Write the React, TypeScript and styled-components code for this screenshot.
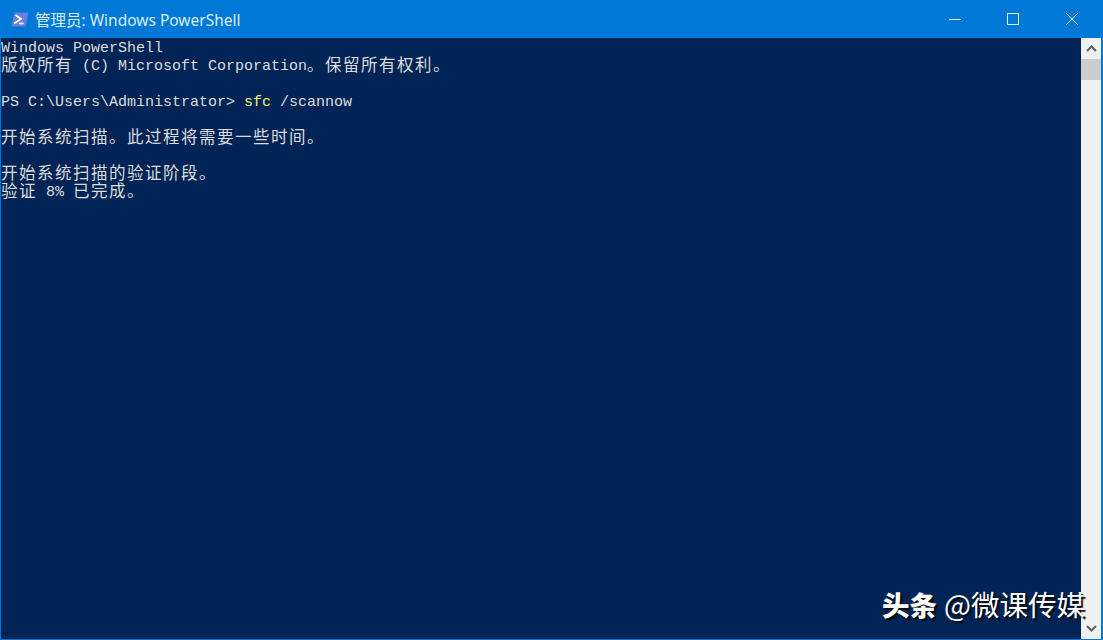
import { FC } from "react";
import styled, { createGlobalStyle } from "styled-components";

const GlobalStyle = createGlobalStyle`
  html, body {
    margin: 0;
    padding: 0;
    background: #0078d7;
  }
`;

const Window = styled.div`
  position: relative;
  width: 1103px;
  height: 640px;
  box-sizing: border-box;
  display: flex;
  flex-direction: column;
  overflow: hidden;
  background: #0078d7;
  padding: 0 2px 1px 1px;
`;

const TitleBar = styled.div`
  height: 38px;
  flex: none;
  display: flex;
  align-items: center;
  color: #d8eefc;
  padding-left: 10px;
`;

const AppIcon = styled.svg`
  width: 18px;
  height: 15px;
  flex: none;
  margin-right: 6px;
`;

const Title = styled.div`
  flex: 1;
  font-family: "Noto Sans", "Noto Sans CJK SC", sans-serif;
  font-size: 15.5px;
  white-space: nowrap;
`;

const Caption = styled.div`
  width: 58.5px;
  height: 38px;
  display: flex;
  align-items: center;
  justify-content: center;
  svg {
    width: 12px;
    height: 12px;
    stroke: #e8f6ff;
    fill: none;
    stroke-width: 1;
  }
`;

const Body = styled.div`
  flex: 1;
  display: flex;
  min-height: 0;
`;

const Console = styled.div`
  flex: 1;
  background: #012456;
  color: #dcdcdc;
  font-family: "Liberation Mono", monospace;
  font-size: 15px;
  line-height: 18px;
  white-space: pre;
  padding-top: 2px;
`;

const Line = styled.div`
  height: 18px;
`;

const Han = styled.span`
  font-family: "Noto Sans CJK SC", sans-serif;
  font-size: 16.5px;
  line-height: 0;
  letter-spacing: 1.5px;
  vertical-align: -1px;
`;

const Command = styled.span`
  color: #f0f078;
`;

const Scrollbar = styled.div`
  width: 20px;
  flex: none;
  display: flex;
  flex-direction: column;
  background: #f0f0f0;
`;

const ArrowButton = styled.div`
  height: 21px;
  flex: none;
  display: flex;
  align-items: center;
  justify-content: center;
  svg {
    width: 11px;
    height: 7px;
    fill: none;
    stroke: #606060;
    stroke-width: 2;
  }
`;

const Thumb = styled.div`
  height: 21px;
  flex: none;
  background: #cdcdcd;
`;

const Track = styled.div`
  flex: 1;
`;

const Watermark = styled.div`
  position: absolute;
  right: 18px;
  bottom: 18px;
  display: flex;
  align-items: center;
  gap: 7px;
  color: #fff;
  font-family: "Noto Sans CJK SC", sans-serif;
  line-height: 36px;
  white-space: nowrap;
  text-shadow: 2px 2px 1px #0a0a0a;
`;

const Brand = styled.span`
  font-size: 27.5px;
  font-weight: 900;
`;

const Handle = styled.span`
  font-size: 28.5px;
  font-weight: 400;
`;

const App: FC = () => {
  return (
    <Window>
      <GlobalStyle />
      <TitleBar>
        <AppIcon viewBox="0 0 18 15">
          <path d="M3.5 0.5H17.5L14.5 14.5H0.5Z" fill="#6a7fe0" />
          <path d="M4.5 3L10 7L3 11.5" fill="none" stroke="#fff" strokeWidth="1.8" />
          <path d="M8 11.5H12.5" fill="none" stroke="#fff" strokeWidth="1.6" />
        </AppIcon>
        <Title>管理员: Windows PowerShell</Title>
        <Caption>
          <svg viewBox="0 0 12 12">
            <path d="M0 6.5H12" />
          </svg>
        </Caption>
        <Caption>
          <svg viewBox="0 0 12 12">
            <rect x="0.5" y="0.5" width="11" height="11" />
          </svg>
        </Caption>
        <Caption>
          <svg viewBox="0 0 12 12">
            <path d="M0 0L12 12M12 0L0 12" />
          </svg>
        </Caption>
      </TitleBar>
      <Body>
        <Console>
          <Line>Windows PowerShell</Line>
          <Line>
            <Han>版权所有</Han> (C) Microsoft Corporation<Han>。保留所有权利。</Han>
          </Line>
          <Line />
          <Line>
            PS C:\Users\Administrator&gt; <Command>sfc</Command> /scannow
          </Line>
          <Line />
          <Line>
            <Han>开始系统扫描。此过程将需要一些时间。</Han>
          </Line>
          <Line />
          <Line>
            <Han>开始系统扫描的验证阶段。</Han>
          </Line>
          <Line>
            <Han>验证</Han> 8% <Han>已完成。</Han>
          </Line>
        </Console>
        <Scrollbar>
          <ArrowButton>
            <svg viewBox="0 0 11 7">
              <path d="M1 6L5.5 1.5L10 6" />
            </svg>
          </ArrowButton>
          <Thumb />
          <Track />
          <ArrowButton>
            <svg viewBox="0 0 11 7">
              <path d="M1 1L5.5 5.5L10 1" />
            </svg>
          </ArrowButton>
        </Scrollbar>
      </Body>
      <Watermark>
        <Brand>头条</Brand>
        <Handle>@微课传媒</Handle>
      </Watermark>
    </Window>
  );
};

export default App;
